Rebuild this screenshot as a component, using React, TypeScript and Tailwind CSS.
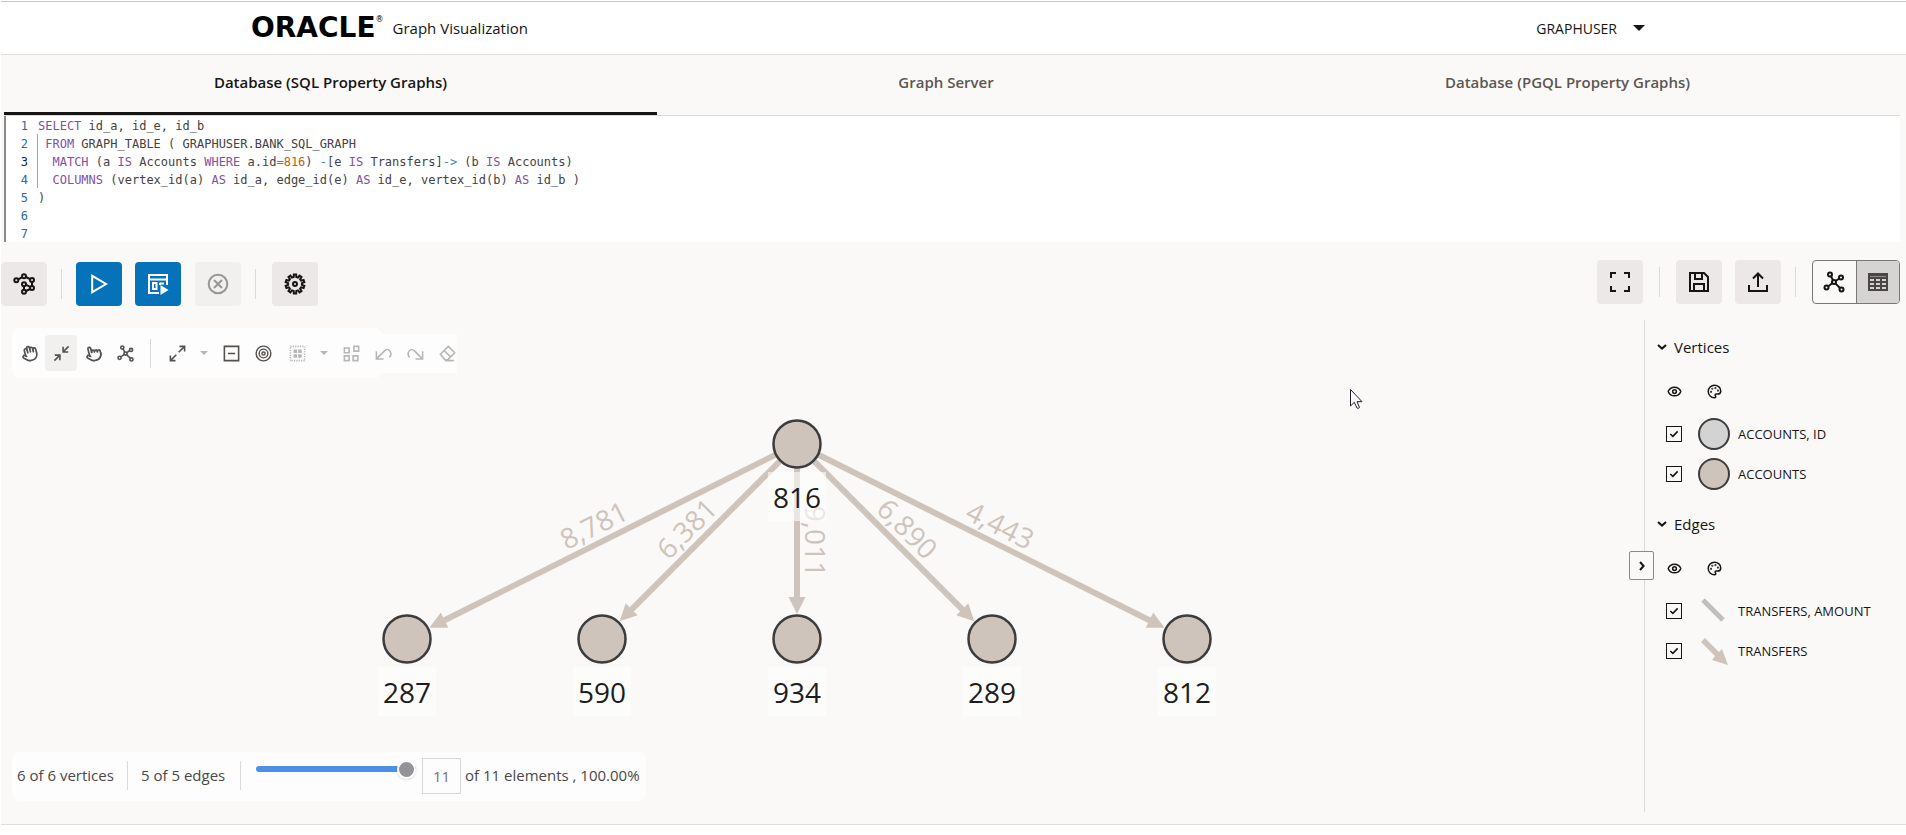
import type { ReactNode } from 'react';
import { Eye, Hand, Palette, Pointer } from 'lucide-react';

const EDGE = '#cec4bc';

function Icon({ children, className = 'size-6', width = 2 }: { children: ReactNode; className?: string; width?: number }) {
  return (
    <svg viewBox="0 0 24 24" fill="none" stroke="currentColor" strokeWidth={width} className={`shrink-0 ${className}`} aria-hidden="true">
      {children}
    </svg>
  );
}

function gearPath(teeth: number, outer: number, inner: number) {
  const points: string[] = [];
  const step = (Math.PI * 2) / teeth;
  for (let i = 0; i < teeth; i++) {
    const at = i * step - Math.PI / 2;
    [
      [-0.3, inner],
      [-0.2, outer],
      [0.2, outer],
      [0.3, inner],
    ].forEach(([shift, r]) => {
      const a = at + shift * step;
      points.push(`${(12 + r * Math.cos(a)).toFixed(2)} ${(12 + r * Math.sin(a)).toFixed(2)}`);
    });
  }
  return `M${points.join('L')}Z`;
}

const Network = () => (
  <>
    <circle cx="12" cy="12" r="2" />
    <circle cx="8" cy="4.5" r="2" />
    <circle cx="19" cy="7.5" r="2" />
    <circle cx="4.5" cy="17.5" r="2" />
    <circle cx="19.5" cy="19.5" r="2" />
    <path d="M9 6.3L11 10.2M13.7 11L17.2 8.5M10.4 13.2L6.2 16.3M13.4 13.4L18 18" />
  </>
);

const Caret = ({ className }: { className: string }) => (
  <svg viewBox="0 0 12 6" className={className} aria-hidden="true">
    <path d="M0 0H12L6 6Z" fill="currentColor" />
  </svg>
);

const Chevron = ({ className = '' }: { className?: string }) => (
  <svg viewBox="0 0 10 6" fill="none" stroke="currentColor" strokeWidth="2" className={`h-[6px] w-[10px] ${className}`} aria-hidden="true">
    <path d="M1 1L5 4.6L9 1" />
  </svg>
);

const tabs = [
  { label: 'Database (SQL Property Graphs)', style: 'grow-[653] border-b-[3px] border-[#161513] pb-[3px] text-[#161513]' },
  { label: 'Graph Server', style: 'grow-[578] pb-[6px] text-[#5b5652]' },
  { label: 'Database (PGQL Property Graphs)', style: 'grow-[665] pb-[6px] text-[#5b5652]' },
];

const K = ({ children }: { children: ReactNode }) => <span className="text-[#8250a5]">{children}</span>;
const Op = ({ children }: { children: ReactNode }) => <span className="text-[#3f87b5]">{children}</span>;

const query: ReactNode[] = [
  <><K>SELECT</K> id_a, id_e, id_b</>,
  <> <K>FROM</K> GRAPH_TABLE ( GRAPHUSER.BANK_SQL_GRAPH</>,
  <>  <K>MATCH</K> (a <K>IS</K> Accounts <K>WHERE</K> a.id<Op>=</Op><span className="text-[#b9610f]">816</span>) <Op>-</Op>[e <K>IS</K> Transfers]<Op>-&gt;</Op> (b <K>IS</K> Accounts)</>,
  <>  <K>COLUMNS</K> (vertex_id(a) <K>AS</K> id_a, edge_id(e) <K>AS</K> id_e, vertex_id(b) <K>AS</K> id_b )</>,
  <>)</>,
  null,
  null,
];

function Editor() {
  return (
    <div className="mr-[6px] ml-[3px] border-l-2 border-[#8c8a88] bg-white font-['DejaVu_Sans_Mono','Liberation_Mono',monospace] text-[12px] leading-5 text-[#45423f]">
      {query.map((line, i) => (
        <div key={i} className="flex h-[18px]">
          <span className={`w-[22px] text-right ${i === 2 ? 'text-[#0b216f]' : 'text-[#2a6aa0]'}`}>{i + 1}</span>
          <code className={`ml-[9px] border-l font-['DejaVu_Sans_Mono','Liberation_Mono',monospace] whitespace-pre ${i > 0 && i < 4 ? 'border-[#a3a19f]' : 'border-transparent'}`}>{line}</code>
        </div>
      ))}
    </div>
  );
}

function ToolButton({ label, tone = 'bg-[#ebe8e7] text-[#161513]', disabled, children }: { label: string; tone?: string; disabled?: boolean; children: ReactNode }) {
  return (
    <button aria-label={label} disabled={disabled} className={`flex h-11 w-[46px] items-center justify-center rounded ${tone}`}>
      <Icon>{children}</Icon>
    </button>
  );
}

const Divider = ({ className = 'mx-[14px] h-[30px]' }: { className?: string }) => <span className={`w-px shrink-0 bg-[#dcdad8] ${className}`} />;

function ActionBar() {
  return (
    <div className="flex h-[78px] items-start justify-between pr-[6px]">
      <div className="flex items-center pt-5">
        <ToolButton label="Graphs">
          <path d="M6.2 7.4L10.2 5.2M14 5L18 7.2M20 10V14M18.2 17L14 19M12 14.3V17.6M14 12.6L18.2 15" />
          <circle cx="4.3" cy="8.3" r="2" />
          <circle cx="12" cy="4.3" r="2" />
          <circle cx="20" cy="8" r="2" />
          <circle cx="12" cy="12.3" r="2" />
          <circle cx="20" cy="16" r="2" />
          <circle cx="12" cy="19.7" r="2" />
        </ToolButton>
        <Divider />
        <ToolButton label="Run" tone="bg-[#0572ba] text-white">
          <path d="M5.2 3.8V20.2L19 12Z" />
        </ToolButton>
        <span className="w-[13px]" />
        <ToolButton label="Run script" tone="bg-[#0572ba] text-white">
          <path d="M13 21H3V3H21V13M3 7.5H21M7 11H10.5V17H7ZM13.5 11.5H18M14 11V13" />
          <path d="M14.5 13V23L22.5 18Z" fill="currentColor" stroke="none" />
        </ToolButton>
        <span className="w-[14px]" />
        <ToolButton label="Cancel" tone="bg-[#f1f0ee] text-[#989694]" disabled>
          <circle cx="12" cy="12" r="9.3" />
          <path d="M8 8L16 16M16 8L8 16" />
        </ToolButton>
        <Divider className="mr-4 ml-[14px] h-[30px]" />
        <ToolButton label="Settings">
          <path d={gearPath(10, 9.5, 7)} />
          <circle cx="12" cy="12" r="2" />
        </ToolButton>
      </div>
      <div className="flex items-center pt-[18px]">
        <ToolButton label="Full screen">
          <path d="M3 8V3H8M16 3H21V8M21 16V21H16M8 21H3V16" />
        </ToolButton>
        <Divider className="mx-4 h-[30px]" />
        <ToolButton label="Save">
          <path d="M3 3H17L21 7V21H3ZM8 3V9H15V3M7 21V14H17V21" />
        </ToolButton>
        <span className="w-[13px]" />
        <ToolButton label="Export">
          <path d="M3 15V21H21V15M12 17V4M7 8.5L12 3.5L17 8.5" />
        </ToolButton>
        <Divider className="mr-4 ml-[14px] h-[30px]" />
        <div className="flex h-11 w-[88px] overflow-hidden rounded border border-[#7a7876]">
          <button aria-label="Graph view" className="flex flex-1 items-center justify-center border-r border-[#7a7876]">
            <Icon><Network /></Icon>
          </button>
          <button aria-label="Table view" className="flex flex-1 items-center justify-center bg-[#d6d4d2] text-[#4a4643]">
            <Icon>
              <path d="M3 4H21V20H3ZM3 8H21M3 12H21M3 16H21M9 8V20M15 8V20" />
              <path d="M3 5.5H21" />
            </Icon>
          </button>
        </div>
      </div>
    </div>
  );
}

const small = 'size-[19px]';
const muted = 'text-[#b9b7b5]';

function GraphTool({ label, tone = '', children }: { label: string; tone?: string; children: ReactNode }) {
  return (
    <button aria-label={label} className={`flex h-9 w-8 shrink-0 items-center justify-center rounded ${tone}`}>
      {children}
    </button>
  );
}

function CanvasToolbar() {
  return (
    <div className="ml-[11px] flex h-[50px] w-[370px] items-center rounded-lg bg-[#fdfdfd]">
      <div className="flex h-[39px] w-[445px] shrink-0 items-center bg-[#fdfdfd] pl-px text-[#55514e]">
        <GraphTool label="Pan"><Hand className="size-[17px] -rotate-15" strokeWidth={2.4} /></GraphTool>
        <GraphTool label="Fit" tone="bg-[#f1f0ee]">
          <Icon className={small}><path d="M21 3L14 10M14 3.5V10H20.5M3 21L10 14M3.5 14H10V20.5" /></Icon>
        </GraphTool>
        <GraphTool label="Select"><Pointer className="size-[17px] -rotate-15" strokeWidth={2.4} /></GraphTool>
        <GraphTool label="Layout"><Icon className={small}><Network /></Icon></GraphTool>
        <Divider className="mr-[10px] ml-[9px] h-[29px]" />
        <GraphTool label="Expand">
          <Icon className={small}><path d="M13.5 10.5L21 3M14.5 3H21V9.5M10.5 13.5L3 21M3 14.5V21H9.5" /></Icon>
        </GraphTool>
        <button aria-label="Expand options" className={`flex w-[22px] shrink-0 justify-center ${muted}`}><Caret className="h-1 w-2" /></button>
        <GraphTool label="Drop"><Icon className={small}><path d="M3 3H21V21H3ZM7.5 12H16.5" /></Icon></GraphTool>
        <GraphTool label="Focus">
          <Icon className={small} width={1.8}>
            <circle cx="12" cy="12" r="9.3" /><circle cx="12" cy="12" r="5.5" /><circle cx="12" cy="12" r="2" />
          </Icon>
        </GraphTool>
        <GraphTool label="Group" tone={`ml-[2px] ${muted}`}>
          <Icon className={small}>
            <rect x="3" y="3" width="18" height="18" strokeDasharray="1.5 1.5" />
            <path d="M7 7h4.5v4.5H7zM12.8 7h4.5v4.5h-4.5zM7 12.8h4.5v4.5H7zM12.8 12.8h4.5v4.5h-4.5z" fill="currentColor" stroke="none" />
          </Icon>
        </GraphTool>
        <button aria-label="Group options" className={`flex w-[22px] shrink-0 justify-center ${muted}`}><Caret className="h-1 w-2" /></button>
        <GraphTool label="Ungroup" tone={muted}>
          <Icon className={small}><path d="M3 5H9V11H3ZM15 3H21V9H15ZM3 15H9V21H3ZM14 15H20V21H14Z" /></Icon>
        </GraphTool>
        <GraphTool label="Undo" tone={muted}>
          <Icon className={small}><path d="M3 9V19H12M3.5 18.5L13 9Q17 5 20 9T19.5 17" /></Icon>
        </GraphTool>
        <GraphTool label="Redo" tone={muted}>
          <Icon className={small}><path d="M21 9V19H12M20.5 18.5L11 9Q7 5 4 9T4.5 17" /></Icon>
        </GraphTool>
        <GraphTool label="Clear" tone={muted}>
          <Icon className={small}><path d="M13 3L21 11L12 20H9L3 13ZM8 8.5L15.5 16M9 21H20" /></Icon>
        </GraphTool>
      </div>
    </div>
  );
}

const root = { id: '816', x: 796, y: 66 };
const children = [
  { id: '287', x: 406, y: 261, amount: '8,781' },
  { id: '590', x: 601, y: 261, amount: '6,381' },
  { id: '934', x: 796, y: 261, amount: '9,011' },
  { id: '289', x: 991, y: 261, amount: '6,890' },
  { id: '812', x: 1186, y: 261, amount: '4,443' },
];

function Graph() {
  return (
    <svg className="h-[374px] w-full text-[28px]" role="img" aria-label="Transfers from account 816">
      {children.map(({ id, x, y, amount }) => {
        const dx = x - root.x;
        const dy = y - root.y;
        const length = Math.hypot(dx, dy);
        const angle = (Math.atan2(dy, dx) * 180) / Math.PI;
        // labels of edges that run to the left are turned over to stay readable
        const textAngle = dx < 0 ? angle - 180 : angle;
        return (
          <g key={id} fill={EDGE}>
            <g transform={`translate(${root.x} ${root.y}) rotate(${angle})`}>
              <path d={`M0 -3H${length - 42}V-8.5L${length - 25} 0L${length - 42} 8.5V3H0Z`} />
            </g>
            <text textAnchor="middle" y="-8" transform={`translate(${root.x + dx / 2} ${root.y + dy / 2}) rotate(${textAngle})`}>
              {amount}
            </text>
          </g>
        );
      })}
      {[root, ...children].map(({ id, x, y }) => (
        <g key={id}>
          <circle cx={x} cy={y} r="23.5" fill={EDGE} stroke="#3c3c3c" strokeWidth="2.5" />
          <rect x={x - 29} y={y + 28} width="58" height="49" fill="#fefefd" opacity="0.6" />
          <text x={x} y={y + 64} textAnchor="middle" fill="#1f1d1b">{id}</text>
        </g>
      ))}
      <path d="M1349.5 11.5V28L1353.3 24.3L1356 30Q1357 31 1358.5 29.5L1356 23.7H1361Z" fill="#fff" stroke="#1c1c26" />
    </svg>
  );
}

function StatusBar() {
  return (
    <div className="mb-[23px] ml-[11px] flex h-[49px] w-[634px] items-center rounded-lg bg-[#fdfdfd] pb-[2px] pl-[5px] text-[15px] whitespace-nowrap text-[#4b4845]">
      <span className="w-[98px]">6 of 6 vertices</span>
      <Divider className="mr-[13px] ml-[12px] h-[29px]" />
      <span className="w-[87px]">5 of 5 edges</span>
      <Divider className="mr-[15px] ml-[12px] h-[29px]" />
      <input
        type="range"
        aria-label="Visible elements"
        min={0}
        max={11}
        defaultValue={11}
        className="mb-[13px] h-[6px] w-[160px] appearance-none rounded-full bg-[#4b8fe8] [&::-webkit-slider-thumb]:size-[19px] [&::-webkit-slider-thumb]:appearance-none [&::-webkit-slider-thumb]:rounded-full [&::-webkit-slider-thumb]:border-2 [&::-webkit-slider-thumb]:border-white [&::-webkit-slider-thumb]:bg-[#929297] [&::-webkit-slider-thumb]:shadow"
      />
      <input aria-label="Element count" defaultValue="11" className="ml-[6px] h-9 w-[39px] border border-[#d9d7d5] text-center text-[#74716e]" />
      <span className="ml-1">of 11 elements , 100.00%</span>
    </div>
  );
}

const legend = [
  {
    title: 'Vertices',
    rows: [
      { label: 'ACCOUNTS, ID', mark: <circle cx="17" cy="17" r="15" fill="#d3d3d3" stroke="#3c3c3c" strokeWidth="2" /> },
      { label: 'ACCOUNTS', mark: <circle cx="17" cy="17" r="15" fill={EDGE} stroke="#3c3c3c" strokeWidth="2" /> },
    ],
  },
  {
    title: 'Edges',
    rows: [
      { label: 'TRANSFERS, AMOUNT', mark: <path d="M6 6L26 26" stroke="#c0bfbf" strokeWidth="5" /> },
      { label: 'TRANSFERS', mark: <path d="M4 8L8 4L22 18L25 15L31 31L15 26L18 22Z" fill={EDGE} /> },
    ],
  },
];

function Legend() {
  return (
    <aside className="relative mb-[12px] w-[262px] shrink-0 border-l border-[#dcdad8] pt-[5px] text-[#161513]">
      {legend.map(({ title, rows }) => (
        <section key={title} className="mb-2">
          <button className="flex h-11 items-center pl-[12px] text-[15px]">
            <Chevron className="mr-[7px]" />
            {title}
          </button>
          <div className="flex h-[45px] items-center pl-[22px]">
            <Eye className="size-[15px]" strokeWidth={2.4} />
            <Palette className="ml-[25px] size-[15px]" strokeWidth={2.4} />
          </div>
          {rows.map(({ label, mark }) => (
            <label key={label} className="flex h-10 items-center text-[13px]">
              <span className="ml-[21px] grid size-4">
                <input type="checkbox" defaultChecked className="size-4 appearance-none border border-[#161513] [grid-area:1/1]" />
                <Icon className="pointer-events-none size-4 [grid-area:1/1]" width={2.4}>
                  <path d="M6.5 12L10.3 15.5L17.5 8" />
                </Icon>
              </span>
              <svg viewBox="0 0 34 34" className="mr-[7px] ml-[15px] size-[34px]" aria-hidden="true">{mark}</svg>
              <span className="pt-px">{label}</span>
            </label>
          ))}
        </section>
      ))}
      <button aria-label="Collapse legend" className="absolute top-[231px] -left-4 flex h-[29px] w-[25px] items-center justify-center rounded-xs border border-[#8c8a88] bg-[#fbf9f8]">
        <Chevron className="-rotate-90" />
      </button>
    </aside>
  );
}

export default function App() {
  return (
    <div className="min-h-screen bg-white pt-px pl-px font-['Open_Sans','Noto_Sans',sans-serif] text-[#161513]">
      <header className="flex h-[54px] items-center justify-between border-t border-b border-t-[#c9c7c5] border-b-[#e1dfdd] pr-[261px] pl-[250px]">
        <div className="flex items-center gap-[9px]">
          <span className="flex items-start font-['DejaVu_Sans',sans-serif] text-[28px] leading-7 font-bold text-black">
            ORACLE
            <sup className="top-0 text-[8px] leading-3 font-normal">®</sup>
          </span>
          <h1 className="pt-px text-[15px]">Graph Visualization</h1>
        </div>
        <button className="flex items-center gap-4 text-[14px]">
          GRAPHUSER
          <Caret className="h-[6px] w-3" />
        </button>
      </header>
      <div className="border-b border-[#e1dfdd] bg-[#fbf9f8]">
        <nav role="tablist" className="mr-[6px] ml-[3px] flex h-[61px] border-b border-[#dcdad8]">
          {tabs.map(({ label, style }, i) => (
            <button key={label} role="tab" aria-selected={i === 0} className={`basis-0 text-[15px] font-semibold whitespace-nowrap ${style}`}>
              {label}
            </button>
          ))}
        </nav>
        <Editor />
        <ActionBar />
        <div className="flex">
          <main className="min-w-0 flex-1 pt-2">
            <CanvasToolbar />
            <Graph />
            <StatusBar />
          </main>
          <Legend />
        </div>
      </div>
    </div>
  );
}
